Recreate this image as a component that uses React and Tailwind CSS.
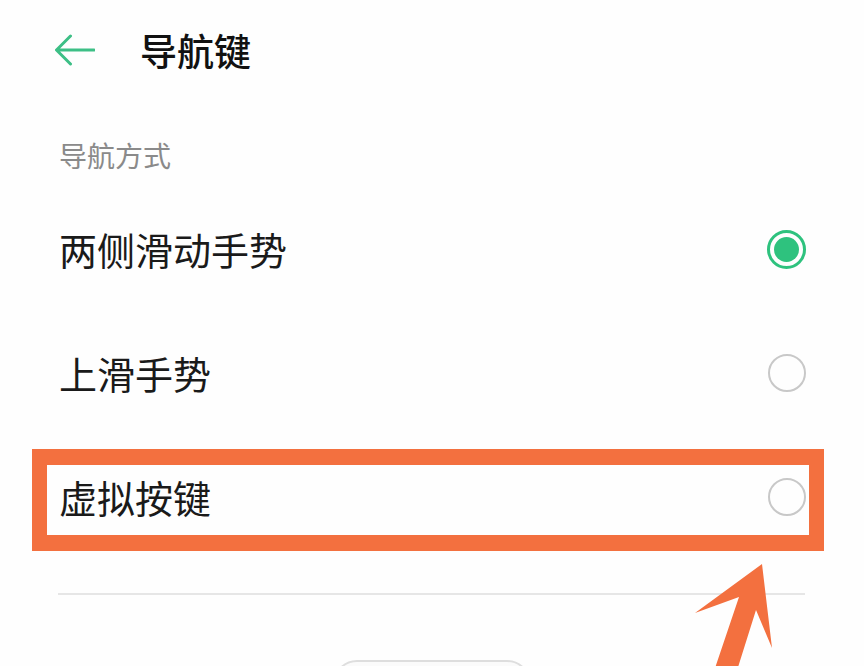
import React, { useState } from 'react'

const options = ['两侧滑动手势', '上滑手势', '虚拟按键']

const Radio = ({ checked }) =>
  checked ? (
    <div className='flex items-center justify-center w-[39px] h-[39px] rounded-full border-[3px] border-[#2ec27e]'>
      <div className='w-[25px] h-[25px] rounded-full bg-[#2ec27e]' />
    </div>
  ) : (
    <div className='w-[38px] h-[38px] rounded-full border-[2.5px] border-[#c8c8c8]' />
  )

const App = () => {
  const [selected, setSelected] = useState(0)

  return (
    <div
      className='relative w-[864px] h-[666px] overflow-hidden bg-[#fefefe]'
      style={{ fontFamily: '"Noto Sans CJK SC", "Noto Sans", sans-serif' }}
    >
      {/* Header */}
      <div className='flex items-center h-[100px] pl-[55px]'>
        <svg width='40' height='32' viewBox='0 0 40 32' fill='none' className='shrink-0'>
          <path d='M2 16 H39 M15.5 2 L1.5 16 L15.5 30' stroke='#3dbf86' strokeWidth='3' strokeLinecap='round' strokeLinejoin='round' />
        </svg>
        <h1 className='ml-[45px] text-[37px] leading-none font-medium text-[#111]'>导航键</h1>
      </div>

      {/* Section label */}
      <div className='flex items-center h-[50px] mt-[30px] pl-[59px] text-[28px] leading-none text-[#8a8a8a]'>
        导航方式
      </div>

      {/* Options */}
      <div className='mt-[7px] pl-[59px] pr-[58px]'>
        {options.map((label, i) => (
          <div
            key={label}
            onClick={() => setSelected(i)}
            className='flex items-center justify-between h-[124px] cursor-pointer'
          >
            <span className='text-[38px] leading-none text-[#1a1a1a]'>{label}</span>
            <Radio checked={selected === i} />
          </div>
        ))}
      </div>

      <div className='mt-[34px] ml-[58px] mr-[59px] h-[2px] bg-[#e6e6e6]' />

      <div className='mt-[65px] ml-[333px] w-[198px] h-[48px] rounded-[24px] border-2 border-[#dedede] bg-[#fbfbfb]' />

      {/* Annotation overlay */}
      <div className='absolute left-[32px] top-[449px] w-[792px] h-[102px] border-x-[15px] border-y-[16px] border-[#f3703f]' />
      <svg className='absolute left-0 top-0' width='864' height='666' viewBox='0 0 864 666'>
        <polygon
          points='762,564 772,648 756,610 734,680 711,680 739,597 695,613'
          fill='#f3703f'
        />
      </svg>
    </div>
  )
}

export default App
